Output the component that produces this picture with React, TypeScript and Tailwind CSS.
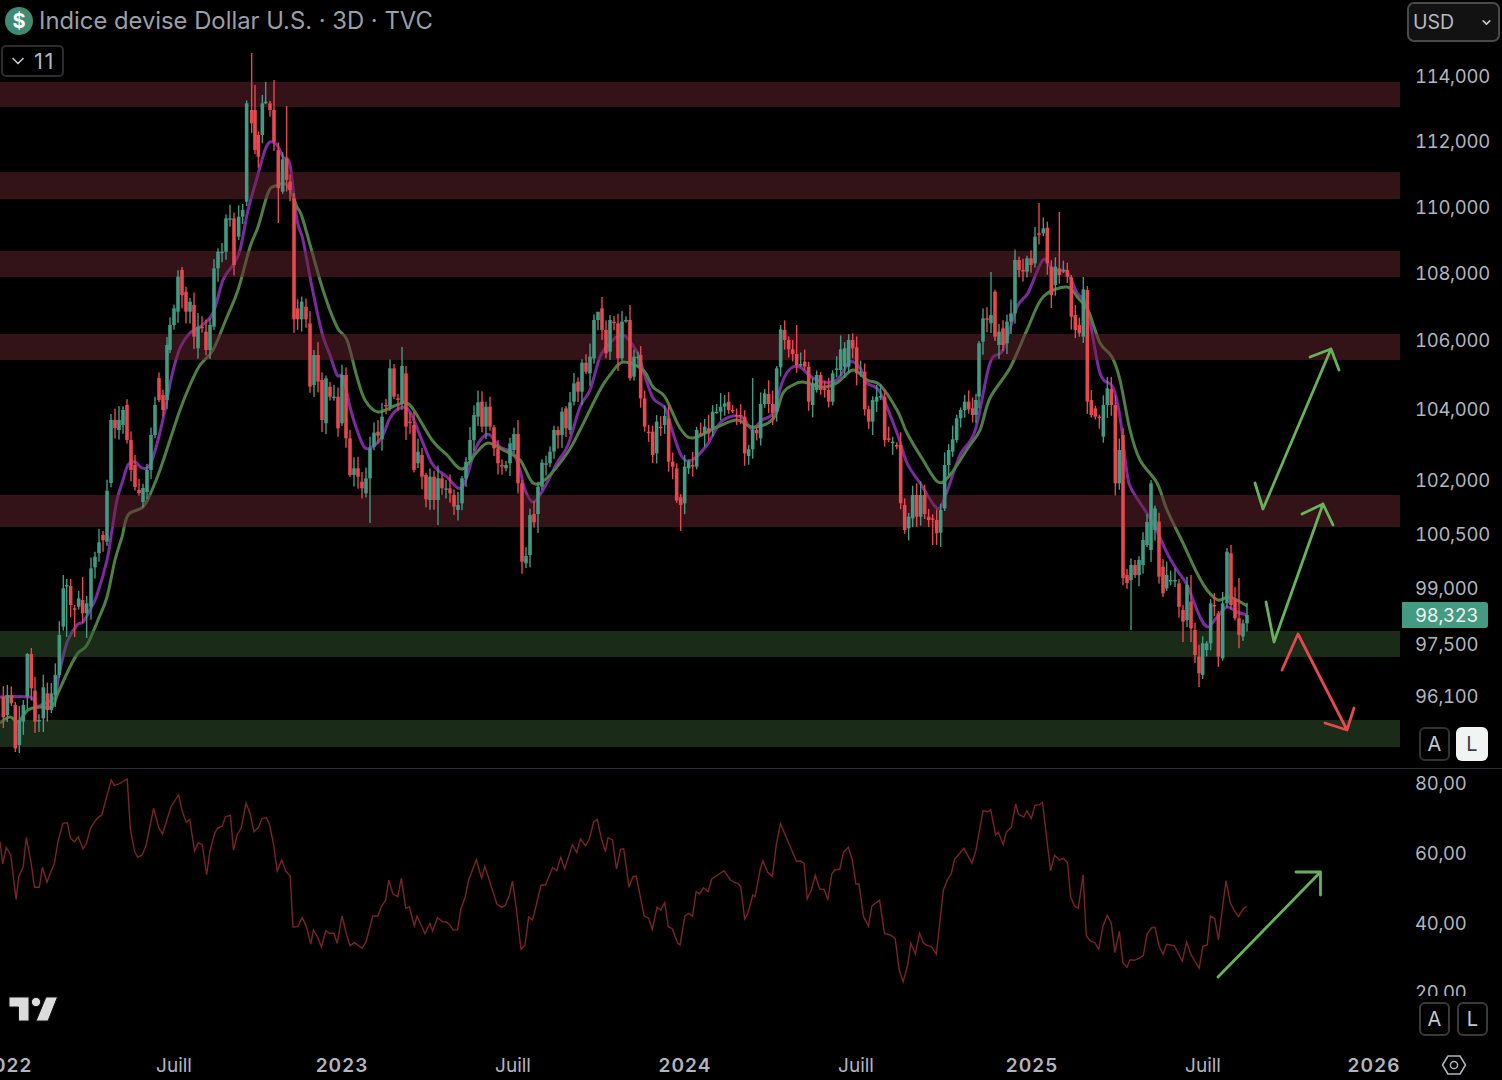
import { ChevronDown } from "lucide-react";

type Candle = [number, number, number, "r" | "g"];
type Pt = [number, number];

const bands = [
  { top: 82, bottom: 107, fill: "#662430" },
  { top: 172, bottom: 199, fill: "#662430" },
  { top: 251, bottom: 277, fill: "#662430" },
  { top: 334, bottom: 360, fill: "#662430" },
  { top: 495, bottom: 527, fill: "#662430" },
  { top: 631, bottom: 657, fill: "#345630" },
  { top: 720, bottom: 747, fill: "#345630" },
];

const prices = [
  { y: 76, label: "114,000" },
  { y: 141, label: "112,000" },
  { y: 207, label: "110,000" },
  { y: 273, label: "108,000" },
  { y: 340, label: "106,000" },
  { y: 409, label: "104,000" },
  { y: 480, label: "102,000" },
  { y: 534, label: "100,500" },
  { y: 588, label: "99,000" },
  { y: 644, label: "97,500" },
  { y: 696, label: "96,100" },
];

const rsiTicks = [
  { y: 14, label: "80,00" },
  { y: 84, label: "60,00" },
  { y: 154, label: "40,00" },
  { y: 223, label: "20,00" },
];

const times = [
  { x: 174, label: "Juill" },
  { x: 342, label: "2023", year: true },
  { x: 513, label: "Juill" },
  { x: 685, label: "2024", year: true },
  { x: 856, label: "Juill" },
  { x: 1032, label: "2025", year: true },
  { x: 1203, label: "Juill" },
  { x: 1374, label: "2026", year: true },
];

// body rows measured at 3x: [x, top, bottom, colour], mapped back to page pixels
const seg = (ox: number, oy: number, rows: Candle[]): Candle[] =>
  rows.map(([x, t, b, c]) => [ox + x / 3, oy + t / 3, oy + b / 3, c]);

const candles: Candle[] = [
  ...seg(0, 480, [
    [10, 650, 712, "r"], [22, 645, 705, "g"], [34, 645, 670, "r"], [46, 675, 805, "r"], [58, 720, 795, "g"],
    [70, 675, 725, "g"], [82, 522, 650, "g"], [94, 522, 625, "r"], [105, 632, 725, "r"], [117, 720, 720, "g"],
    [130, 622, 715, "g"], [142, 640, 690, "r"], [154, 640, 690, "g"], [166, 585, 645, "g"], [178, 465, 585, "g"],
    [190, 325, 440, "g"], [200, 315, 315, "g"], [212, 318, 375, "r"], [224, 385, 385, "r"], [236, 355, 380, "g"],
    [248, 360, 400, "r"], [260, 370, 400, "g"], [273, 265, 380, "g"], [285, 230, 262, "g"], [297, 187, 220, "g"],
    [309, 165, 180, "r"], [321, 32, 185, "g"],
  ]),
  [111, 420, 483, "g"], [115, 420, 428, "r"], [119, 420, 430, "g"], [123, 410, 425, "g"], [127, 405, 440, "r"],
  [131, 440, 470, "r"], [135, 465, 487, "r"], [139, 490, 493, "r"], [143, 488, 502, "g"], [147, 470, 492, "g"],
  [151, 435, 470, "g"], [155, 405, 435, "g"], [159, 378, 400, "r"], [163, 395, 410, "r"], [167, 345, 400, "g"],
  ...seg(0, 50, [
    [510, 825, 900, "g"], [522, 775, 825, "g"], [534, 680, 785, "g"], [546, 660, 735, "r"], [558, 725, 785, "r"],
    [570, 755, 785, "g"], [582, 765, 860, "r"], [594, 830, 895, "g"], [606, 830, 830, "r"], [618, 845, 900, "r"],
    [630, 825, 900, "g"], [642, 655, 830, "g"], [654, 605, 655, "g"], [666, 605, 605, "g"], [678, 505, 605, "g"],
    [690, 505, 505, "g"], [702, 505, 645, "r"], [716, 500, 560, "g"], [728, 480, 500, "g"], [740, 160, 455, "g"],
    [755, 180, 220, "r"], [765, 180, 300, "r"], [775, 255, 320, "r"], [787, 160, 255, "g"], [797, 155, 155, "g"],
    [810, 160, 180, "r"], [822, 180, 275, "r"], [835, 300, 415, "r"], [848, 328, 425, "g"], [860, 325, 390, "r"],
    [870, 395, 420, "r"], [882, 445, 808, "r"], [893, 775, 808, "r"], [905, 755, 808, "g"], [918, 770, 808, "r"],
  ]),
  ...seg(280, 290, [
    [90, 100, 290, "r"], [102, 195, 285, "g"], [114, 195, 275, "r"], [126, 270, 390, "r"], [138, 265, 400, "g"],
    [150, 290, 320, "r"], [162, 320, 320, "g"], [174, 320, 415, "r"], [186, 255, 400, "g"], [198, 255, 445, "r"],
    [210, 445, 555, "r"], [222, 535, 555, "g"], [234, 535, 560, "r"], [246, 575, 595, "r"], [258, 565, 610, "g"],
    [270, 475, 565, "g"], [282, 428, 470, "g"], [294, 425, 437, "r"], [306, 380, 448, "g"], [318, 345, 345, "r"],
    [330, 235, 350, "g"], [342, 235, 320, "r"], [354, 325, 325, "r"], [366, 228, 340, "g"], [378, 250, 410, "r"],
    [390, 395, 395, "r"], [402, 405, 540, "r"], [414, 485, 520, "g"], [426, 495, 560, "r"], [438, 555, 628, "r"],
    [450, 560, 630, "g"], [462, 560, 630, "r"], [474, 565, 630, "g"], [486, 565, 595, "r"], [498, 595, 595, "g"],
    [510, 595, 610, "r"], [522, 615, 650, "r"], [534, 645, 660, "g"], [546, 565, 640, "g"], [558, 515, 565, "g"],
    [570, 450, 510, "g"], [582, 375, 450, "g"], [594, 337, 380, "g"], [606, 335, 410, "r"], [618, 350, 410, "g"],
    [630, 350, 410, "r"], [642, 412, 475, "r"], [654, 475, 520, "r"], [666, 525, 525, "r"], [678, 525, 535, "g"],
    [690, 460, 520, "g"], [702, 432, 480, "g"], [714, 432, 580, "r"], [726, 580, 815, "r"], [738, 798, 820, "g"],
    [750, 675, 795, "g"], [762, 672, 697, "r"], [774, 590, 672, "g"], [786, 518, 590, "g"], [798, 520, 520, "g"],
    [810, 485, 520, "g"], [822, 420, 485, "g"], [834, 420, 436, "r"], [846, 365, 435, "g"], [858, 355, 415, "r"],
    [870, 337, 420, "g"], [882, 280, 335, "g"], [894, 275, 305, "r"], [906, 218, 305, "g"], [918, 218, 245, "r"],
    [930, 200, 250, "g"], [942, 90, 205, "g"], [954, 65, 90, "g"], [966, 55, 120, "r"], [978, 120, 190, "r"],
    [990, 90, 185, "g"], [1002, 95, 95, "r"], [1014, 100, 205, "r"], [1026, 95, 205, "g"], [1038, 90, 90, "g"],
    [1050, 90, 265, "r"], [1062, 200, 260, "g"], [1074, 200, 200, "g"],
  ]),
  ...seg(640, 290, [
    [2, 195, 325, "r"], [14, 325, 410, "r"], [26, 425, 425, "r"], [38, 425, 495, "r"], [50, 395, 490, "g"],
    [62, 410, 410, "r"], [74, 378, 405, "g"], [86, 385, 515, "r"], [98, 515, 530, "r"], [110, 535, 632, "r"],
    [122, 622, 645, "r"], [134, 530, 640, "g"], [146, 515, 535, "g"], [158, 525, 525, "r"], [170, 420, 530, "g"],
    [182, 430, 430, "r"], [194, 410, 430, "g"], [206, 415, 430, "r"], [218, 365, 415, "g"], [230, 365, 365, "g"],
    [242, 350, 365, "g"], [254, 340, 350, "g"], [266, 335, 360, "r"], [278, 360, 360, "r"], [290, 375, 375, "r"],
    [302, 375, 375, "r"], [314, 380, 490, "r"], [326, 478, 498, "g"], [338, 420, 478, "g"], [350, 420, 430, "r"],
    [362, 342, 445, "g"], [374, 310, 342, "g"], [386, 312, 342, "r"], [398, 342, 368, "r"], [410, 235, 365, "g"],
    [422, 118, 232, "g"], [434, 120, 150, "r"], [446, 150, 178, "r"], [458, 178, 192, "r"], [470, 192, 225, "r"],
    [482, 222, 222, "g"], [494, 215, 230, "r"], [506, 230, 335, "r"], [518, 280, 345, "g"], [530, 255, 300, "g"],
    [542, 255, 300, "r"], [554, 295, 295, "r"], [566, 300, 335, "r"], [578, 250, 335, "g"], [590, 235, 235, "g"],
    [602, 178, 240, "g"], [614, 175, 230, "g"], [626, 150, 230, "g"], [638, 150, 175, "r"], [650, 172, 250, "r"],
    [662, 245, 245, "g"], [674, 245, 358, "r"], [686, 358, 395, "r"], [698, 330, 395, "g"], [710, 320, 335, "g"],
    [722, 318, 318, "g"], [734, 320, 450, "r"], [746, 445, 445, "r"], [758, 455, 455, "g"], [770, 465, 465, "r"],
    [782, 465, 640, "r"], [794, 645, 720, "r"], [806, 680, 715, "g"], [818, 615, 685, "g"], [830, 615, 680, "r"],
    [842, 615, 680, "g"], [854, 615, 672, "r"], [866, 680, 690, "r"], [878, 685, 685, "r"], [890, 690, 730, "r"],
    [902, 660, 728, "g"], [914, 525, 655, "g"], [926, 480, 525, "g"], [938, 448, 485, "g"], [950, 385, 450, "g"],
    [962, 360, 385, "g"], [974, 335, 360, "g"], [986, 335, 358, "r"], [998, 355, 375, "r"], [1008, 330, 375, "g"],
  ]),
  ...seg(960, 190, [
    [57, 460, 620, "g"], [69, 385, 455, "g"], [81, 385, 385, "r"], [93, 375, 400, "g"], [105, 305, 440, "r"],
    [117, 425, 465, "g"], [129, 415, 465, "r"], [141, 395, 460, "g"], [153, 370, 395, "g"], [165, 210, 370, "g"],
    [177, 210, 240, "r"], [189, 240, 240, "r"], [201, 205, 245, "g"], [213, 205, 225, "r"], [225, 140, 220, "g"],
    [237, 130, 130, "r"], [250, 115, 130, "g"], [262, 113, 220, "r"], [274, 230, 315, "r"], [286, 230, 285, "g"],
    [298, 235, 255, "r"], [310, 240, 240, "g"], [322, 240, 260, "r"], [334, 262, 380, "r"], [346, 375, 420, "r"],
    [358, 405, 430, "r"], [370, 298, 440, "g"], [382, 300, 635, "r"], [394, 630, 675, "r"], [406, 655, 680, "r"],
    [418, 680, 680, "r"], [430, 645, 740, "g"], [442, 595, 645, "g"], [454, 597, 645, "r"], [466, 645, 880, "r"],
    [478, 780, 880, "g"],
  ]),
  [1123, 435, 578, "r"], [1127, 575, 583, "r"], [1131, 565, 580, "g"], [1135, 565, 575, "r"], [1139, 560, 575, "g"],
  [1143, 540, 565, "g"], [1147, 522, 545, "g"],
  ...seg(1150, 480, [
    [3, 10, 210, "g"], [15, 85, 150, "g"], [27, 125, 290, "r"], [39, 260, 340, "r"], [50, 285, 325, "g"],
    [62, 300, 300, "g"], [75, 300, 300, "g"], [87, 310, 380, "r"], [99, 390, 425, "r"], [111, 315, 420, "g"],
    [123, 365, 445, "r"], [135, 450, 525, "r"], [147, 530, 580, "r"], [158, 490, 585, "g"], [170, 490, 510, "g"],
    [182, 370, 490, "g"], [193, 375, 375, "r"], [205, 400, 530, "r"], [218, 370, 535, "g"], [231, 215, 370, "g"],
    [243, 220, 375, "r"], [255, 360, 415, "r"], [267, 415, 465, "r"], [279, 430, 470, "g"], [291, 405, 430, "g"],
  ]),
];

// long wicks that stand out on the chart: [x, high, low]
const wicks: [number, number | null, number | null][] = [
  [15, null, 752], [19, null, 753], [27, 653, null], [31, 648, null], [35, null, 733], [43, null, 732],
  [63, 575, null], [67, null, 637], [71, 579, null], [75, 605, 637], [83, 577, 623], [87, null, 638],
  [251, 53, null], [255, 85, null], [262, 95, null], [266, 82, null], [274, 80, null], [278, null, 223], [287, 106, null],
  [370, null, 523], [402, 347, null], [437, null, 525], [526, null, 568], [538, null, 533],
  [602, 297, null], [630, 305, null], [598, 313, null],
  [682, null, 531], [754, 378, null], [782, 325, null], [798, 325, null], [934, null, 545], [938, null, 545], [942, null, 547],
  [991, 272, null], [1039, 203, null], [1051, null, 308], [1059, 212, null],
  [1131, null, 630], [1151, 480, null], [1183, null, 642], [1191, 575, 642], [1195, null, 663], [1199, null, 687],
  [1226, 548, null], [1231, 545, null], [1239, 578, null],
];

const purple: Pt[] = [
  [0, 697], [30, 697], [37, 706], [43, 704], [55, 697], [58, 680], [63, 657], [68, 640], [77, 625], [83, 622], [90, 610], [97, 595],
  [107, 560], [112, 530], [117, 500], [123, 480], [128, 465], [135, 462], [142, 468], [150, 465], [158, 440], [165, 410], [172, 375],
  [180, 348], [190, 333], [200, 327], [213, 313], [223, 280], [233, 265], [240, 250], [248, 210], [257, 178], [265, 150], [270, 142],
  [277, 145], [283, 157], [290, 165], [297, 220], [303, 240], [312, 287], [322, 333], [330, 355], [337, 375], [343, 377], [350, 407],
  [357, 430], [365, 448], [375, 445], [383, 435], [390, 418], [400, 408], [410, 412], [423, 443], [433, 465], [447, 477], [458, 488],
  [465, 482], [475, 450], [483, 437], [490, 435], [500, 447], [513, 453], [520, 470], [525, 490], [533, 502], [543, 490], [557, 463],
  [568, 445], [580, 407], [590, 390], [600, 357], [610, 343], [623, 335], [637, 352], [643, 370], [653, 398], [665, 408], [673, 433],
  [682, 457], [692, 460], [707, 445], [720, 423], [733, 416], [743, 418], [752, 429], [762, 420], [773, 413], [782, 383], [790, 369],
  [800, 367], [810, 376], [823, 382], [837, 380], [850, 362], [860, 368], [867, 383], [880, 392], [897, 433], [907, 463], [920, 483],
  [937, 508], [945, 497], [960, 455], [975, 431], [990, 363], [1003, 350], [1017, 307], [1028, 293], [1043, 260], [1053, 270],
  [1067, 272], [1077, 293], [1087, 307], [1100, 373], [1113, 387], [1120, 417], [1127, 473], [1132, 490], [1153, 523], [1167, 553],
  [1177, 570], [1187, 585], [1200, 617], [1208, 627], [1217, 617], [1227, 607], [1237, 612], [1247, 615],
];

const green: Pt[] = [
  [0, 723], [10, 717], [18, 722], [28, 710], [40, 707], [52, 707], [58, 693], [70, 667], [78, 653], [87, 645], [98, 620], [107, 597],
  [115, 560], [122, 537], [128, 515], [143, 507], [152, 490], [160, 470], [170, 440], [180, 410], [190, 385], [200, 365], [213, 350],
  [227, 317], [238, 290], [250, 247], [258, 227], [268, 193], [275, 186], [287, 185], [297, 207], [303, 220], [323, 290], [337, 327],
  [347, 340], [357, 377], [365, 400], [378, 412], [397, 405], [410, 405], [432, 440], [447, 455], [462, 469], [477, 452], [488, 443],
  [503, 450], [520, 460], [533, 483], [547, 478], [568, 452], [580, 430], [600, 390], [610, 375], [623, 362], [643, 370], [653, 387],
  [665, 397], [680, 428], [693, 438], [717, 427], [737, 420], [753, 427], [773, 419], [783, 393], [793, 385], [803, 382], [823, 387],
  [837, 383], [853, 370], [867, 380], [880, 385], [897, 410], [907, 433], [923, 460], [938, 482], [950, 475], [968, 448], [980, 430],
  [990, 398], [1010, 368], [1027, 330], [1043, 297], [1067, 287], [1078, 298], [1088, 310], [1100, 343], [1112, 357], [1120, 380],
  [1130, 430], [1140, 460], [1157, 483], [1167, 510], [1183, 543], [1197, 573], [1207, 590], [1218, 600], [1230, 597], [1247, 606],
];

const rsiLeft: Pt[] = [
  [0, 215], [6, 282], [14, 232], [24, 255], [36, 388], [42, 320], [52, 290], [59, 202], [70, 280], [77, 352], [88, 352], [95, 292], [105, 337],
  [122, 278], [130, 215], [141, 160], [151, 158], [158, 205], [167, 215], [175, 200], [186, 236], [193, 222], [203, 175], [212, 155], [220, 142],
  [228, 135], [249, 30], [256, 46], [268, 41], [285, 27], [292, 178], [302, 247], [309, 262], [319, 254], [328, 222], [344, 115], [356, 175],
  [364, 192], [383, 110], [400, 74], [408, 122], [417, 157], [425, 148], [436, 243], [444, 218], [453, 224], [463, 314], [470, 245], [481, 190],
  [487, 175], [498, 168], [505, 140], [516, 136], [523, 241], [531, 195], [540, 175], [551, 100], [560, 130], [569, 185], [579, 172], [587, 145],
  [597, 143], [604, 165], [613, 225], [621, 303], [631, 270], [640, 303], [650, 318], [656, 471], [667, 470], [677, 443], [686, 468], [696, 522],
  [702, 480], [712, 503], [720, 531], [730, 482], [738, 490], [748, 490], [755, 520], [766, 438], [777, 498], [784, 527], [794, 518], [811, 535],
  [820, 515], [835, 438], [846, 438], [855, 408], [864, 390], [871, 330], [880, 372], [891, 380], [899, 325], [909, 415], [917, 410], [928, 468],
  [934, 438], [952, 491], [963, 460], [969, 483], [980, 443], [991, 455], [1000, 456], [1008, 465], [1015, 480], [1025, 479], [1032, 420],
  [1042, 380], [1050, 330], [1067, 269], [1079, 325], [1086, 289], [1113, 402], [1124, 412], [1132, 405], [1141, 375], [1148, 333], [1157, 420],
  [1167, 538], [1176, 525], [1184, 441], [1193, 450], [1212, 345], [1222, 345], [1238, 292], [1247, 302], [1256, 262], [1265, 297], [1282, 224],
  [1292, 248], [1300, 207], [1312, 228], [1320, 207], [1330, 155], [1338, 148], [1347, 205], [1356, 245], [1362, 203], [1372, 210], [1381, 297],
  [1390, 238], [1397, 236], [1409, 352], [1418, 320], [1425, 318], [1443, 438], [1453, 445], [1461, 478], [1472, 412], [1480, 420], [1489, 398],
  [1497, 470], [1506, 476], [1518, 520],
];

const rsiRight: Pt[] = [
  [0, 525], [11, 438], [20, 430], [28, 439], [36, 365], [44, 371], [53, 353], [63, 365], [71, 327], [99, 302], [113, 330], [122, 337], [130, 340],
  [136, 350], [145, 447], [152, 430], [163, 375], [168, 380], [180, 296], [186, 273], [196, 306], [207, 319], [216, 222], [225, 161], [261, 274],
  [270, 273], [278, 280], [285, 387], [294, 360], [303, 316], [313, 357], [323, 358], [331, 390], [340, 312], [347, 299], [358, 298], [366, 248],
  [377, 232], [386, 270], [394, 342], [401, 342], [411, 440], [422, 468], [430, 408], [447, 391], [458, 491], [470, 494], [482, 505], [491, 600],
  [500, 635], [510, 585], [517, 520], [527, 552], [537, 490], [545, 518], [553, 526], [563, 530], [574, 552], [590, 360], [599, 330], [608, 310],
  [615, 268], [636, 235], [654, 280], [663, 240], [675, 150], [679, 122], [690, 125], [696, 119], [707, 195], [713, 186], [724, 224], [731, 187],
  [742, 172], [752, 102], [758, 132], [770, 141], [777, 122], [787, 146], [795, 106], [805, 104], [812, 97], [830, 302], [839, 256], [850, 270],
  [859, 265], [868, 278], [875, 380], [884, 408], [892, 415], [903, 315], [910, 497], [919, 513], [929, 518], [938, 538], [947, 470], [957, 436],
  [966, 460], [974, 548], [984, 484], [992, 578], [1001, 592], [1008, 569], [1018, 571], [1028, 565], [1038, 556], [1046, 492], [1056, 474],
  [1064, 472], [1073, 527], [1082, 553], [1090, 523], [1107, 527], [1125, 573], [1135, 516], [1144, 552], [1163, 595], [1171, 529], [1181, 525],
  [1188, 438], [1198, 446], [1206, 510], [1223, 332], [1233, 400], [1243, 425], [1251, 440], [1261, 418], [1269, 408],
];

const rsiPoints = [
  ...rsiLeft.map(([x, y]) => `${(x / 2.24).toFixed(1)},${(770 + y / 3).toFixed(1)}`),
  ...rsiRight.map(([x, y]) => `${(680 + x / 2.24).toFixed(1)},${(770 + y / 3).toFixed(1)}`),
].join(" ");

// catmull-rom through the digitized points so the averages read as curves
function smooth(p: Pt[]) {
  let d = `M${p[0][0]} ${p[0][1]}`;
  for (let i = 0; i < p.length - 1; i++) {
    const a = p[Math.max(i - 1, 0)];
    const b = p[i];
    const c = p[i + 1];
    const e = p[Math.min(i + 2, p.length - 1)];
    const c1x = b[0] + (c[0] - a[0]) / 6;
    const c1y = b[1] + (c[1] - a[1]) / 6;
    const c2x = c[0] - (e[0] - b[0]) / 6;
    const c2y = c[1] - (e[1] - b[1]) / 6;
    d += ` C${c1x.toFixed(1)} ${c1y.toFixed(1)} ${c2x.toFixed(1)} ${c2y.toFixed(1)} ${c[0]} ${c[1]}`;
  }
  return d;
}

// small seeded generator so the short wicks stay the same on every render
function noise(i: number) {
  const v = Math.sin(i * 127.1 + 11.7) * 43758.5453;
  return v - Math.floor(v);
}

function CandleBars() {
  return (
    <g>
      {candles.map(([x, top, bottom, c], i) => {
        const color = c === "r" ? "#e5484f" : "#429a82";
        const long = wicks.find((w) => Math.abs(w[0] - x) < 2);
        const high = long?.[1] ?? top - 2 - noise(i) * 12;
        const low = long?.[2] ?? bottom + 2 + noise(i + 500) * 12;
        const h = Math.max(bottom - top, 1.5);
        return (
          <g key={i} fill={color}>
            <rect x={x - 0.7} y={high} width={1.4} height={low - high} />
            <rect x={x - 1.8} y={top} width={3.6} height={h} />
          </g>
        );
      })}
    </g>
  );
}

function MainChart() {
  return (
    <svg width={1400} height={768} viewBox="0 0 1400 768" className="block">
      <path d={smooth(purple)} fill="none" stroke="#7d2a9e" strokeWidth={3} />
      <path d={smooth(green)} fill="none" stroke="#4f7f45" strokeWidth={3} />
      {bands.map((b) => (
        <rect key={b.top} x={0} y={b.top} width={1400} height={b.bottom - b.top} fill={b.fill} fillOpacity={0.5} />
      ))}
      <CandleBars />
      <g fill="none" strokeWidth={2.8} strokeLinecap="round" strokeLinejoin="round">
        <g stroke="#68b25c">
          <path d="M1255 483L1263 509L1331 349M1310 357L1331 349L1339 370" />
          <path d="M1266 602L1274 642L1323 504M1302 514L1323 504L1333 525" />
        </g>
        <path stroke="#e5484f" d="M1282 670L1298 634L1347 730M1325 723L1347 730L1354 708" />
      </g>
    </svg>
  );
}

function TvLogo() {
  return (
    <svg width={52} height={28} viewBox="8 995 52 28" className="absolute left-[8px] top-[226px]">
      <g fill="#dcdcdc" stroke="#141414" strokeWidth={1}>
        <path d="M9 997H29V1021H18.5V1007H9Z" />
        <circle cx={36} cy={1002} r={4.6} />
        <path d="M46 997H57.5L48 1021H36Z" />
      </g>
    </svg>
  );
}

export default function App() {
  return (
    <div className="w-[1502px] h-[1080px] bg-black overflow-hidden flex flex-col font-['Inter',sans-serif] text-[#b2b5bd]">
      {/* Price pane */}
      <div className="flex h-[768px] shrink-0">
        <div className="relative w-[1400px]">
          <MainChart />
          <div className="absolute left-[5px] top-[6px] flex items-center gap-[6px]">
            <div className="w-[28px] h-[28px] rounded-full bg-[#3f8a73] flex items-center justify-center text-white font-bold text-[20px] leading-none">
              $
            </div>
            <span className="text-[23.8px] leading-[30px] text-[#9c9fa7] whitespace-nowrap">Indice devise Dollar U.S. · 3D · TVC</span>
          </div>
          <div className="absolute left-[1px] top-[45px] w-[63px] h-[32px] bg-black border-2 border-[#2c2c2e] rounded-[5px] flex items-center pl-[5px] gap-[6px]">
            <ChevronDown size={20} strokeWidth={2} className="text-[#c4c6cc]" />
            <span className="text-[22px] leading-none tracking-[1.5px] text-[#b2b5bd]">11</span>
          </div>
        </div>
        <div className="relative w-[102px] text-[18.5px] leading-none">
          <div className="absolute left-[7px] top-[2px] w-[93px] h-[40px] rounded-[7px] border-2 border-[#4a4a4c] bg-[#121212] flex items-center justify-between pl-[4px] pr-[5px]">
            <span className="text-[#b8bac0] text-[19.5px] leading-none pt-[2px]">USD</span>
            <ChevronDown size={13} strokeWidth={3} className="text-[#c4c6cc]" />
          </div>
          {prices.map((p) => (
            <span key={p.label} className="absolute left-[15px] -translate-y-1/2 tabular-nums tracking-[-0.3px]" style={{ top: p.y }}>
              {p.label}
            </span>
          ))}
          <div className="absolute left-[2px] top-[602px] w-[86px] h-[26px] bg-[#439b82] rounded-r-[3px] flex items-center pl-[13px] text-[#f1f3f3] tabular-nums tracking-[-0.3px]">
            98,323
          </div>
          <div className="absolute left-[19px] top-[727px] flex gap-[6px] text-[20px]">
            <div className="w-[31px] h-[34px] rounded-[6px] border-2 border-[#333] flex items-center justify-center text-[#c4c6cc]">A</div>
            <div className="w-[32px] h-[34px] rounded-[6px] bg-[#f2f3f3] flex items-center justify-center text-[#3c3c3e]">L</div>
          </div>
        </div>
      </div>

      <div className="h-[1px] bg-[#2a2e39] shrink-0" />

      {/* RSI pane */}
      <div className="flex h-[271px] shrink-0">
        <div className="relative w-[1400px]">
          <svg width={1400} height={271} viewBox="0 769 1400 271" className="block">
            <polyline points={rsiPoints} fill="none" stroke="#7a2429" strokeWidth={1.4} />
            <path
              d="M1218 977L1320.5 872M1296 872L1320.5 872L1320.5 895"
              fill="none"
              stroke="#68b25c"
              strokeWidth={2.8}
              strokeLinecap="round"
              strokeLinejoin="round"
            />
          </svg>
          <TvLogo />
        </div>
        <div className="relative w-[102px] text-[18.5px] leading-none">
          <div className="relative h-[227px] overflow-hidden">
            {rsiTicks.map((t) => (
              <span key={t.label} className="absolute left-[15px] -translate-y-1/2 tabular-nums tracking-[-0.3px]" style={{ top: t.y }}>
                {t.label}
              </span>
            ))}
          </div>
          <div className="absolute left-[19px] top-[233px] flex gap-[7px] text-[20px]">
            <div className="w-[31px] h-[34px] rounded-[6px] border-2 border-[#3a3a3c] flex items-center justify-center text-[#c4c6cc]">A</div>
            <div className="w-[31px] h-[34px] rounded-[6px] border-2 border-[#3a3a3c] flex items-center justify-center text-[#c4c6cc]">L</div>
          </div>
        </div>
      </div>

      {/* Time axis */}
      <div className="relative flex-1 text-[19px] leading-none">
        <span className="absolute left-[-20px] top-[16px] font-semibold tracking-[1.1px]">2022</span>
        {times.map((t) => (
          <span
            key={t.x}
            className={t.year ? "absolute top-[16px] -translate-x-1/2 font-semibold tracking-[1.1px]" : "absolute top-[16px] -translate-x-1/2"}
            style={{ left: t.x }}
          >
            {t.label}
          </span>
        ))}
        <svg width={26} height={24} viewBox="0 0 26 24" className="absolute left-[1441px] top-[13px]" fill="none" stroke="#b2b5bd" strokeWidth={1.5}>
          <path d="M7 3H19L24.5 12L19 21H7L1.5 12Z" strokeLinejoin="round" />
          <circle cx={13} cy={12} r={3.6} />
        </svg>
      </div>
    </div>
  );
}
